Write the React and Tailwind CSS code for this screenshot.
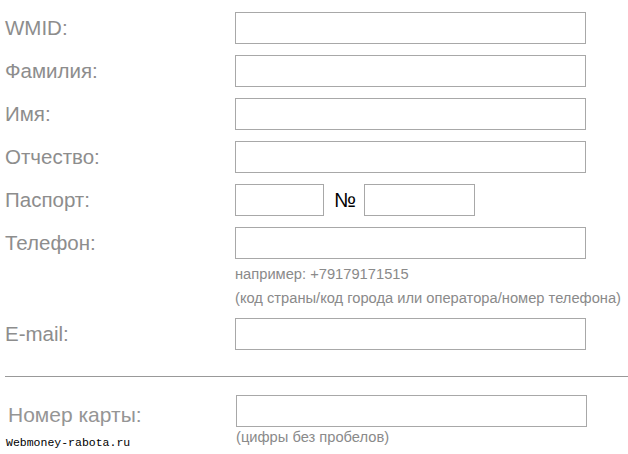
import React from "react";

const labelCls = "w-[230px] shrink-0 text-[20.5px] leading-[24px] text-[#8d8d8d]";
const boxCls = "h-[32px] border border-[#a8a8a8] bg-white";
const hintCls = "text-[14.7px] leading-[24px] text-[#8a8a8a] whitespace-nowrap";

function Row({ label, children }) {
  return (
    <div className="flex items-center h-[32px]">
      <div className={labelCls}>{label}</div>
      {children}
    </div>
  );
}

export default function App() {
  return (
    <div
      className="relative w-[628px] h-[454px] overflow-hidden bg-white"
      style={{ fontFamily: '"Liberation Sans", Arial, sans-serif' }}
    >
      <div className="pt-[12px] pl-[5px] flex flex-col gap-[11px]">
        <Row label="WMID:">
          <div className={`${boxCls} w-[351px]`} />
        </Row>
        <Row label="Фамилия:">
          <div className={`${boxCls} w-[351px]`} />
        </Row>
        <Row label="Имя:">
          <div className={`${boxCls} w-[351px]`} />
        </Row>
        <Row label="Отчество:">
          <div className={`${boxCls} w-[351px]`} />
        </Row>
        <Row label="Паспорт:">
          <div className={`${boxCls} w-[89px]`} />
          <div className="w-[40px] pl-[2px] text-center text-[20.5px] text-black">№</div>
          <div className={`${boxCls} w-[111px]`} />
        </Row>
        <div className="flex">
          <div className={`${labelCls} pt-[4px]`}>Телефон:</div>
          <div className="flex flex-col">
            <div className={`${boxCls} w-[351px]`} />
            <div className={`mt-[3px] ${hintCls}`}>например: +79179171515</div>
            <div className={hintCls}>
              (код страны/код города или оператора/номер телефона)
            </div>
          </div>
        </div>
      </div>
      <div className="pl-[5px] mt-[8px]">
        <Row label="E-mail:">
          <div className={`${boxCls} w-[351px]`} />
        </Row>
      </div>
      <div className="ml-[5px] mt-[26px] h-px bg-[#999999]" />
      <div className="flex pl-[8px] mt-[18px]">
        <div className="w-[228px] shrink-0 pt-[8px] text-[21px] leading-[24px] text-[#959595]">
          Номер карты:
        </div>
        <div className="flex flex-col">
          <div className={`${boxCls} w-[351px]`} />
          <div className="text-[14.7px] leading-[20px] text-[#8a8a8a]">
            (цифры без пробелов)
          </div>
        </div>
      </div>
      <div
        className="absolute left-[6px] top-[436px] text-[11.5px] leading-[14px] text-black"
        style={{ fontFamily: '"Liberation Mono", "Courier New", monospace' }}
      >
        Webmoney-rabota.ru
      </div>
    </div>
  );
}
